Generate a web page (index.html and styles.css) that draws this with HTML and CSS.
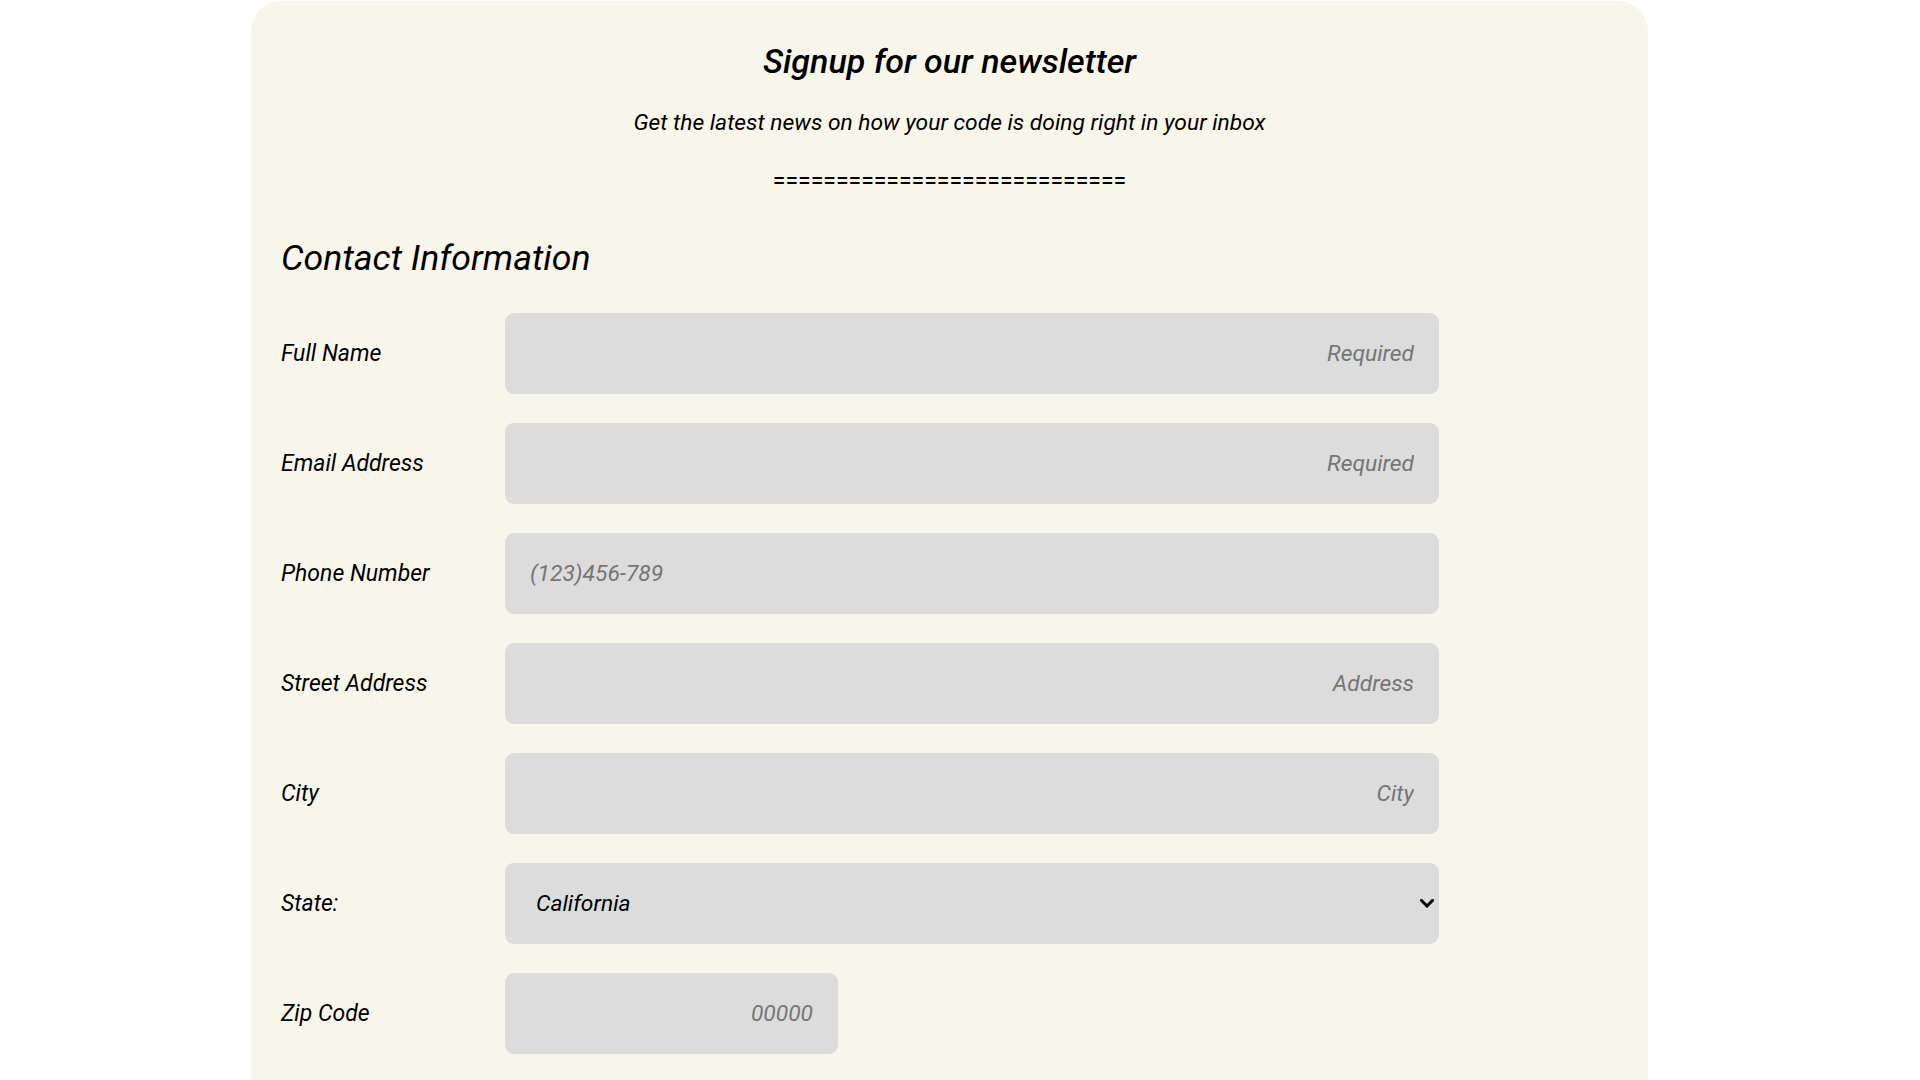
FILE: index.html
```html
<!DOCTYPE html>
<html lang="en">
<head>
<meta charset="utf-8">
<title>Signup for our newsletter</title>
<link rel="stylesheet" href="styles.css">
</head>
<body>
<main class="card">
  <header class="intro">
    <h1 class="title">Signup for our newsletter</h1>
    <p class="subtitle">Get the latest news on how your code is doing right in your inbox</p>
    <p class="divider">============================</p>
  </header>
  <form class="form">
    <h2 class="section-title">Contact Information</h2>
    <div class="fields">
      <label class="label" for="name">Full Name</label>
      <input class="field right" id="name" type="text" placeholder="Required">

      <label class="label" for="email">Email Address</label>
      <input class="field right" id="email" type="email" placeholder="Required">

      <label class="label" for="phone">Phone Number</label>
      <input class="field" id="phone" type="tel" placeholder="(123)456-789">

      <label class="label" for="street">Street Address</label>
      <input class="field right" id="street" type="text" placeholder="Address">

      <label class="label" for="city">City</label>
      <input class="field right" id="city" type="text" placeholder="City">

      <label class="label" for="state">State:</label>
      <div class="select-wrap">
        <select class="field select" id="state">
          <option>California</option>
          <option>Nevada</option>
          <option>Oregon</option>
        </select>
        <svg class="chevron" width="14" height="9" viewBox="0 0 14 9" aria-hidden="true">
          <polyline points="1.5,1.5 7,7 12.5,1.5" fill="none" stroke="#000" stroke-width="3" stroke-linecap="square" stroke-linejoin="miter"/>
        </svg>
      </div>

      <label class="label" for="zip">Zip Code</label>
      <input class="field right zip" id="zip" type="text" placeholder="00000">
    </div>
  </form>
</main>
</body>
</html>
```

FILE: styles.css
```css
html, body {
  margin: 0;
  padding: 0;
  background: #ffffff;
}

body {
  font-family: Roboto, "Liberation Sans", sans-serif;
  font-style: italic;
  color: #000;
  padding-top: 1px;
}

.card {
  width: 1397px;
  min-height: 1200px;
  margin-left: 251px;
  box-sizing: border-box;
  background: #f8f6ea;
  border-radius: 30px 30px 0 0;
  padding: 40px 30px 0;
}

.intro {
  text-align: center;
}

.title {
  margin: 0;
  font-size: 34px;
  font-weight: 500;
  line-height: 40px;
}

.subtitle {
  margin: 29px 0 0;
  font-size: 22.8px;
  line-height: 26px;
  font-weight: 400;
}

.divider {
  margin: 33px 0 0;
  font-size: 23px;
  line-height: 26px;
  font-style: normal;
}

.section-title {
  margin: 42px 0 0;
  font-size: 35.7px;
  font-weight: 400;
  line-height: 42px;
}

.fields {
  margin-top: 34px;
  display: grid;
  grid-template-columns: 224px 934px;
  row-gap: 29px;
  align-items: center;
}

.label {
  font-size: 23px;
  line-height: 26px;
}

.field {
  box-sizing: border-box;
  height: 81px;
  width: 100%;
  border: none;
  border-radius: 9px;
  background: #dcdcdc;
  padding: 0 25px;
  font-family: Roboto, "Liberation Sans", sans-serif;
  font-style: italic;
  font-size: 22.8px;
  color: #000;
  outline: none;
  margin: 0;
}

.field::placeholder {
  color: #757575;
  font-style: italic;
}

.right {
  text-align: right;
}

.select-wrap {
  position: relative;
  height: 81px;
}

.select {
  appearance: none;
  -webkit-appearance: none;
  padding: 0 40px 0 31px;
}

.chevron {
  position: absolute;
  right: 5px;
  top: 36px;
  pointer-events: none;
}

.zip {
  width: 333px;
}
```
